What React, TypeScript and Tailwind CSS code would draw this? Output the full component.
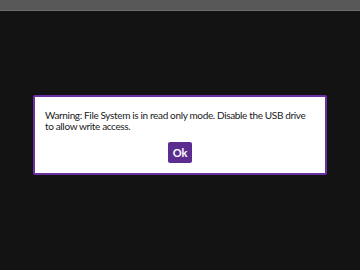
export default function App() {
  return (
    <div className="w-[360px] h-[270px] bg-[#131313] flex flex-col overflow-hidden" style={{ fontFamily: "Lato, 'Liberation Sans', sans-serif" }}>
      {/* top bar */}
      <div className="h-[11px] shrink-0 bg-[#575757] border-b border-[#6b6b6b]" />

      <div className="flex-1 flex justify-center pt-[84px]">
        <div className="w-[294px] h-[80px] bg-white border-2 border-[#6a2fa0] rounded-[2px] flex flex-col pl-[10px] pt-[13px]">
          <p className="w-[266px] text-[10px] leading-[11px] tracking-[-0.35px] text-[#1a1a1a]">
            Warning: File System is in read only mode. Disable the USB drive to allow write access.
          </p>
          <div className="flex justify-center mt-[10px] ml-[-10px]">
            <button className="w-[24px] h-[21px] rounded-[2px] bg-[#5b2d8e] text-white text-[11px] font-bold leading-none">
              Ok
            </button>
          </div>
        </div>
      </div>
    </div>
  );
}
